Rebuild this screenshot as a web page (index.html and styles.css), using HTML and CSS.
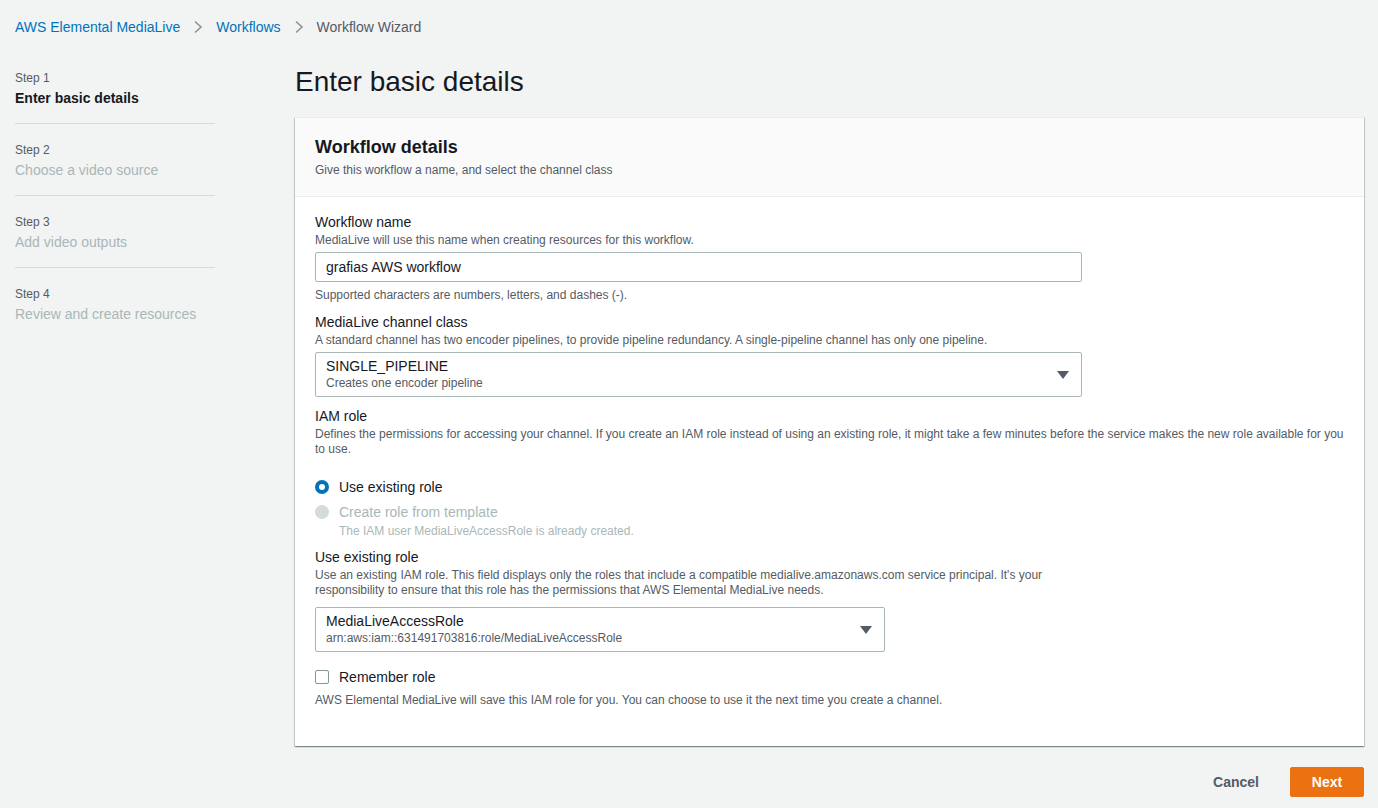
FILE: index.html
```html
<!DOCTYPE html>
<html>
<head>
<meta charset="utf-8">
<link rel="stylesheet" href="styles.css">
</head>
<body>
<div class="page">
  <nav class="crumbs">
    <a class="crumb-link">AWS Elemental MediaLive</a>
    <svg class="chev" width="10" height="14" viewBox="0 0 10 14"><path d="M2 1.5 L8 7 L2 12.5" fill="none" stroke="#879596" stroke-width="1.6"/></svg>
    <a class="crumb-link">Workflows</a>
    <svg class="chev" width="10" height="14" viewBox="0 0 10 14"><path d="M2 1.5 L8 7 L2 12.5" fill="none" stroke="#879596" stroke-width="1.6"/></svg>
    <span class="crumb-current">Workflow Wizard</span>
  </nav>
  <div class="layout">
    <aside class="steps">
      <div class="step">
        <div class="step-num">Step 1</div>
        <div class="step-title active">Enter basic details</div>
      </div>
      <div class="step">
        <div class="step-num">Step 2</div>
        <div class="step-title">Choose a video source</div>
      </div>
      <div class="step">
        <div class="step-num">Step 3</div>
        <div class="step-title">Add video outputs</div>
      </div>
      <div class="step last">
        <div class="step-num">Step 4</div>
        <div class="step-title">Review and create resources</div>
      </div>
    </aside>
    <main class="main">
      <h1 class="title">Enter basic details</h1>
      <section class="card">
        <header class="card-head">
          <h2 class="card-title">Workflow details</h2>
          <div class="card-desc">Give this workflow a name, and select the channel class</div>
        </header>
        <div class="card-body">
          <div class="field">
            <div class="label">Workflow name</div>
            <div class="desc">MediaLive will use this name when creating resources for this workflow.</div>
            <div class="input">grafias AWS workflow</div>
            <div class="hint">Supported characters are numbers, letters, and dashes (-).</div>
          </div>
          <div class="field">
            <div class="label">MediaLive channel class</div>
            <div class="desc">A standard channel has two encoder pipelines, to provide pipeline redundancy. A single-pipeline channel has only one pipeline.</div>
            <div class="select wide">
              <div class="select-text">
                <div class="select-main">SINGLE_PIPELINE</div>
                <div class="select-sub">Creates one encoder pipeline</div>
              </div>
              <svg class="caret" width="12" height="8" viewBox="0 0 12 8"><path d="M0 0 H12 L6 8 Z" fill="#545b64"/></svg>
            </div>
          </div>
          <div class="field iam">
            <div class="label">IAM role</div>
            <div class="desc">Defines the permissions for accessing your channel. If you create an IAM role instead of using an existing role, it might take a few minutes before the service makes the new role available for you to use.</div>
            <div class="radios">
              <div class="radio">
                <span class="radio-dot on"></span>
                <span class="radio-label">Use existing role</span>
              </div>
              <div class="radio disabled">
                <span class="radio-dot off"></span>
                <div>
                  <div class="radio-label">Create role from template</div>
                  <div class="radio-sub">The IAM user MediaLiveAccessRole is already created.</div>
                </div>
              </div>
            </div>
          </div>
          <div class="field">
            <div class="label">Use existing role</div>
            <div class="desc narrow">Use an existing IAM role. This field displays only the roles that include a compatible medialive.amazonaws.com service principal. It's your responsibility to ensure that this role has the permissions that AWS Elemental MediaLive needs.</div>
            <div class="select medium">
              <div class="select-text">
                <div class="select-main">MediaLiveAccessRole</div>
                <div class="select-sub">arn:aws:iam::631491703816:role/MediaLiveAccessRole</div>
              </div>
              <svg class="caret" width="12" height="8" viewBox="0 0 12 8"><path d="M0 0 H12 L6 8 Z" fill="#545b64"/></svg>
            </div>
          </div>
          <div class="field last">
            <div class="check">
              <span class="box"></span>
              <span class="check-label">Remember role</span>
            </div>
            <div class="hint">AWS Elemental MediaLive will save this IAM role for you. You can choose to use it the next time you create a channel.</div>
          </div>
        </div>
      </section>
      <div class="actions">
        <button class="btn-link">Cancel</button>
        <button class="btn-primary">Next</button>
      </div>
    </main>
  </div>
</div>
</body>
</html>
```

FILE: styles.css
```css
* { box-sizing: border-box; }
html, body { margin: 0; padding: 0; }
body {
  background: #f2f3f3;
  font-family: "Liberation Sans", Arial, sans-serif;
  color: #16191f;
  font-size: 14px;
  width: 1378px;
  height: 808px;
  overflow: hidden;
}
.page { padding: 0 14px 0 15px; }
.crumbs {
  display: flex;
  align-items: center;
  height: 54px;
  font-size: 14px;
}
.crumb-link { color: #0073bb; }
.crumb-current { color: #545b64; }
.chev { margin: 0 13px 0 13px; }
.layout { display: flex; }
.steps { width: 200px; flex: none; padding-top: 16px; }
.step { border-bottom: 1px solid #d5dbdb; padding: 0 0 15px 0; margin-bottom: 18px; }
.step.last { border-bottom: none; }
.step-num { font-size: 12px; color: #545b64; line-height: 16px; }
.step-title { font-size: 14px; color: #aab7b8; line-height: 20px; margin-top: 2px; }
.step-title.active { color: #16191f; font-weight: bold; }
.main { margin-left: 80px; flex: 1; }
.title {
  font-size: 28px;
  font-weight: normal;
  margin: 10px 0 0 0;
  line-height: 36px;
  height: 54px;
}
.card {
  background: #fff;
  box-shadow: 0 1px 1px 0 rgba(0,28,36,0.3), 1px 1px 1px 0 rgba(0,28,36,0.15), -1px 1px 1px 0 rgba(0,28,36,0.15);
  border-top: 1px solid #eaeded;
  margin-top: -1px;
}
.card-head {
  background: #fafafa;
  border-bottom: 1px solid #eaeded;
  padding: 18px 20px 18px 20px;
}
.card-title { font-size: 18px; font-weight: bold; margin: 0; line-height: 22px; }
.card-desc { font-size: 12px; color: #545b64; line-height: 16px; margin-top: 4px; }
.card-body { padding: 17px 20px 38px 20px; }
.field { margin-bottom: 11px; }
.field.iam { margin-bottom: 10px; }
.field.last { margin-bottom: 0; }
.label { font-size: 14px; line-height: 17px; color: #16191f; }
.desc { font-size: 12px; line-height: 15px; color: #545b64; margin-top: 2px; }
.desc.narrow { max-width: 760px; margin-bottom: 9px; }
.input {
  margin-top: 4px;
  width: 767px;
  height: 30px;
  border: 1px solid #aab7b8;
  border-radius: 2px;
  padding: 0 10px;
  display: flex;
  align-items: center;
  font-size: 14px;
}
.hint { font-size: 12px; color: #545b64; line-height: 16px; margin-top: 5px; }
.select {
  margin-top: 4px;
  height: 45px;
  border: 1px solid #aab7b8;
  border-radius: 2px;
  padding: 0 12px 0 10px;
  display: flex;
  align-items: center;
  justify-content: space-between;
}
.select.wide { width: 767px; }
.select.medium { width: 570px; }
.select-main { font-size: 14px; line-height: 17px; }
.select-sub { font-size: 12px; line-height: 15px; color: #545b64; margin-top: 1px; }
.radios { margin-top: 20px; display: flex; flex-direction: column; gap: 5px; }
.radio { display: flex; align-items: flex-start; gap: 10px; }
.radio-dot {
  width: 14px; height: 14px; border-radius: 50%; flex: none; margin-top: 3px;
}
.radio-dot.on { border: 4px solid #0073bb; background: #fff; }
.radio-dot.off { background: #d5dbdb; }
.radio-label { font-size: 14px; line-height: 20px; }
.radio.disabled .radio-label { color: #aab7b8; }
.radio-sub { font-size: 12px; color: #aab7b8; line-height: 15px; margin-top: 2px; }
.check { display: flex; align-items: center; gap: 10px; margin-top: 15px; }
.box { width: 14px; height: 14px; border: 1px solid #879596; border-radius: 2px; background: #fff; }
.check-label { font-size: 14px; line-height: 20px; }
.actions { display: flex; justify-content: flex-end; align-items: center; margin-top: 21px; gap: 31px; }
.btn-link {
  background: none; border: none; font-family: inherit; font-size: 14px; font-weight: bold; color: #545b64; padding: 0;
}
.btn-primary {
  background: #ec7211; color: #fff; border: 1px solid #ec7211; border-radius: 2px;
  font-family: inherit; font-size: 14px; font-weight: bold;
  width: 74px; height: 30px; padding: 0;
}
```
